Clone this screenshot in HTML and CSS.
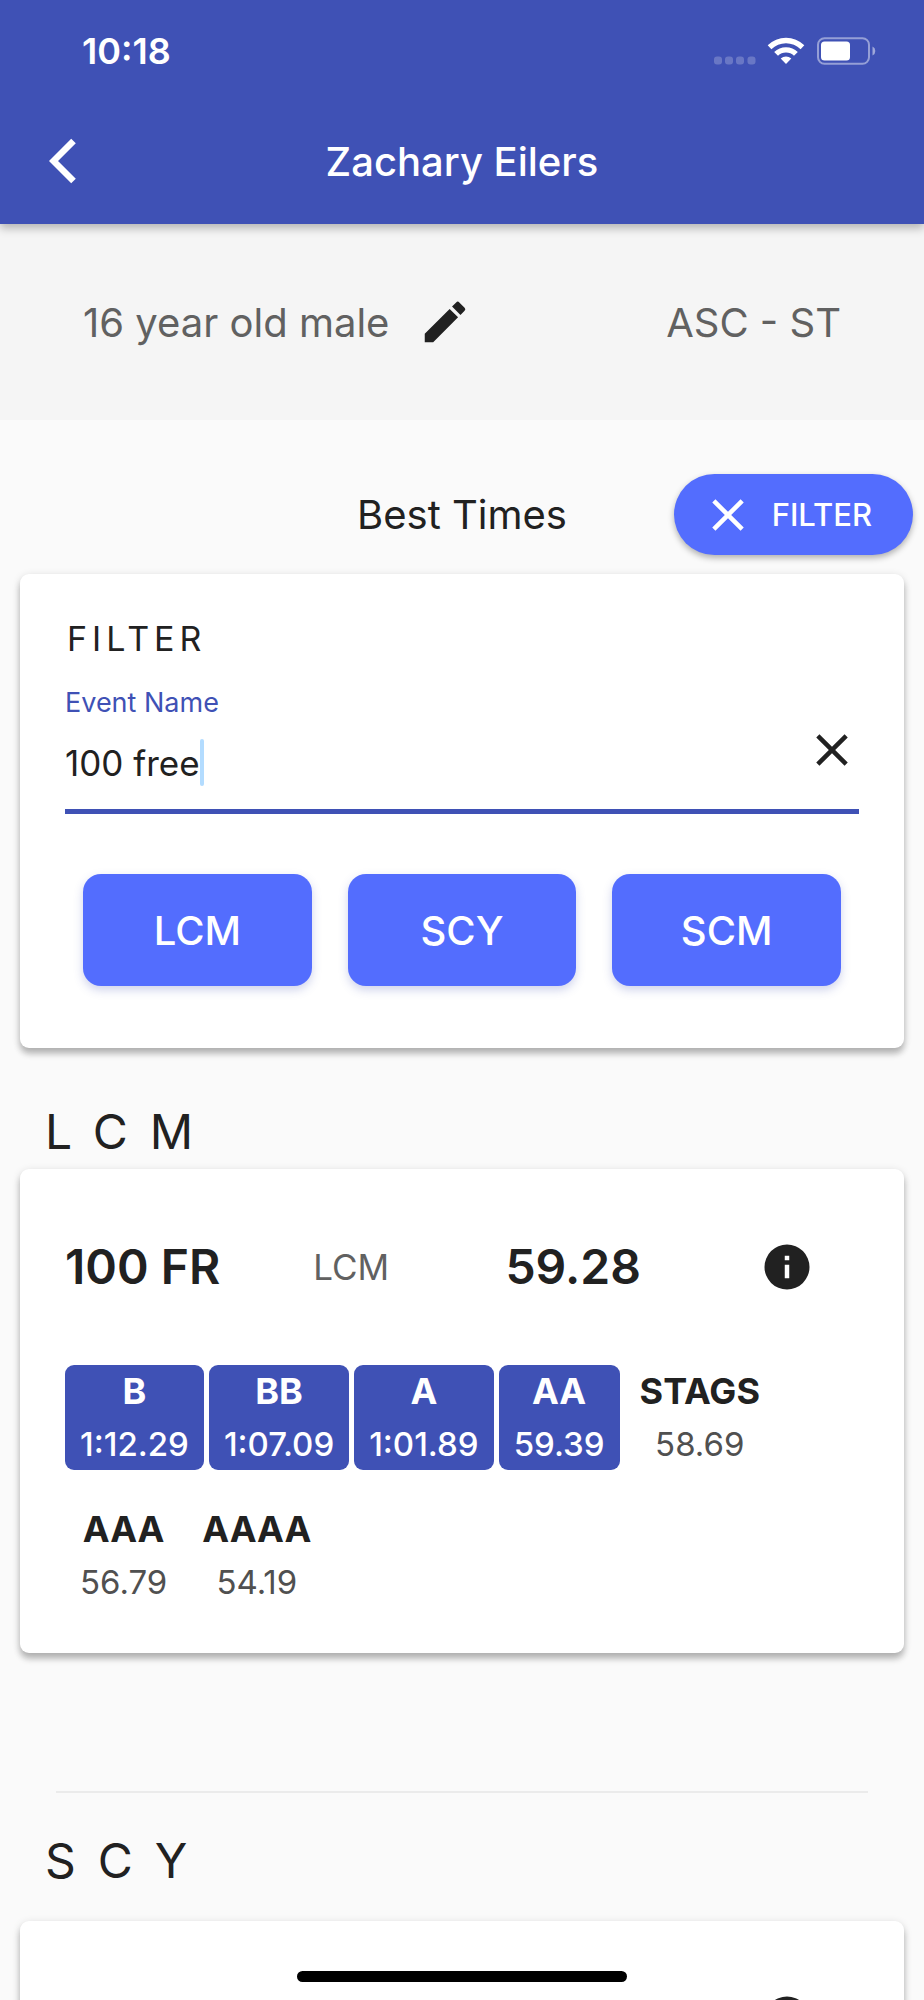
FILE: index.html
```html
<!DOCTYPE html>
<html lang="en">
<head>
  <meta charset="UTF-8" />
  <meta name="viewport" content="width=device-width, initial-scale=1.0"/>
  <title>Zachary Eilers</title>
  <link rel="stylesheet" href="styles.css">
</head>
<body>

  <header class="app-header">
    <div class="status-bar">
      <span class="clock">10:18</span>
      <svg class="status-icons" width="164" height="28" viewBox="0 0 164 28" fill="#fff" aria-hidden="true">
        <!-- signal dots -->
        <g opacity="0.22">
          <rect x="0" y="19.5" width="8" height="8" rx="3"/>
          <rect x="11" y="19.5" width="8" height="8" rx="3"/>
          <rect x="22" y="19.5" width="8" height="8" rx="3"/>
          <rect x="33.500" y="19.5" width="8" height="8" rx="3"/>
        </g>
        <!-- wifi -->
        <path d="M53.700 8.300a26 26 0 0 1 36.600 0l-3.700 3.900a20.600 20.600 0 0 0-29.200 0z"/>
        <path d="M60.200 14.900a17 17 0 0 1 23.600 0l-3.800 3.800a11.600 11.600 0 0 0-16 0z"/>
        <path d="M66.700 21.600a8 8 0 0 1 10.600 0L72 27z"/>
        <!-- battery -->
        <rect x="104" y="1.200" width="51" height="25.600" rx="6.500" fill="none" stroke="#fff" stroke-width="2" opacity="0.45"/>
        <rect x="107" y="4.500" width="29" height="19" rx="3.500"/>
        <path d="M158.500 9.500a5 5 0 0 1 0 9z" opacity="0.5"/>
      </svg>
    </div>
    <div class="title-bar">
      <button class="icon-btn back-btn" type="button" aria-label="Back">
        <svg width="28" height="46" viewBox="0 0 28 46"><path d="M24.500 3L4.500 23l20 20" fill="none" stroke="#fff" stroke-width="6.500"/></svg>
      </button>
      <h1>Zachary Eilers</h1>
    </div>
  </header>

  <section class="profile">
    <span>16 year old male</span>
    <button class="icon-btn" type="button" aria-label="Edit">
      <svg class="icon" viewBox="0 0 24 24"><path d="M3 17.250V21h3.750L17.810 9.940l-3.750-3.750L3 17.250zM20.710 7.040a1 1 0 0 0 0-1.410l-2.340-2.340a1 1 0 0 0-1.410 0l-1.830 1.830 3.750 3.750 1.830-1.830z"/></svg>
    </button>
    <span class="team">ASC - ST</span>
  </section>

  <main>
    <div class="times-header">
      <h2>Best Times</h2>
      <button class="filter-toggle" type="button">
        <svg class="icon" viewBox="0 0 24 24"><path d="M19 6.410L17.590 5 12 10.590 6.410 5 5 6.410 10.590 12 5 17.590 6.410 19 12 13.410 17.590 19 19 17.590 13.410 12z"/></svg>
        FILTER
      </button>
    </div>

    <form class="card filter-card">
      <h3>FILTER</h3>
      <label for="event_name">Event Name</label>
      <div class="field">
        <input id="event_name" name="event_name" type="text" value="100 free" autocomplete="off">
        <span class="caret"></span>
        <button class="icon-btn clear-btn" type="button" aria-label="Clear">
          <svg class="icon" viewBox="0 0 24 24"><path d="M19 6.410L17.590 5 12 10.590 6.410 5 5 6.410 10.590 12 5 17.590 6.410 19 12 13.410 17.590 19 19 17.590 13.410 12z"/></svg>
        </button>
      </div>
      <div class="course-buttons">
        <button type="button">LCM</button>
        <button type="button">SCY</button>
        <button type="button">SCM</button>
      </div>
    </form>

    <h2 class="course-heading">LCM</h2>
    <article class="card event-card">
      <div class="event-row">
        <strong>100 FR</strong>
        <span class="course">LCM</span>
        <strong>59.28</strong>
        <button class="icon-btn info-btn" type="button" aria-label="Info">
          <svg class="icon" viewBox="0 0 24 24"><path d="M12 2a10 10 0 1 0 0 20 10 10 0 0 0 0-20zm1 15h-2v-6h2v6zm0-8h-2V7h2v2z"/></svg>
        </button>
      </div>
      <ul class="standards">
        <li class="met"><b>B</b><span>1:12.29</span></li>
        <li class="met"><b>BB</b><span>1:07.09</span></li>
        <li class="met"><b>A</b><span>1:01.89</span></li>
        <li class="met"><b>AA</b><span>59.39</span></li>
        <li><b>STAGS</b><span>58.69</span></li>
        <li><b>AAA</b><span>56.79</span></li>
        <li><b>AAAA</b><span>54.19</span></li>
      </ul>
    </article>

    <hr>

    <h2 class="course-heading scy">SCY</h2>
    <article class="card event-card">
      <div class="event-row">
        <button class="icon-btn info-btn" type="button" aria-label="Info">
          <svg class="icon" viewBox="0 0 24 24"><path d="M12 2a10 10 0 1 0 0 20 10 10 0 0 0 0-20zm1 15h-2v-6h2v6zm0-8h-2V7h2v2z"/></svg>
        </button>
      </div>
    </article>
  </main>

  <div class="home-indicator"></div>

</body>
</html>
```

FILE: styles.css
```css
* {
  box-sizing: border-box;
}

body {
  margin: 0;
  height: 100vh;
  overflow: hidden;
  background: #fafafa;
  color: #212121;
  font-family: Inter, "Liberation Sans", sans-serif;
}

h1, h2, h3 {
  margin: 0;
  font-weight: 400;
}

button {
  border: none;
  font-family: inherit;
  cursor: pointer;
}

.icon {
  display: block;
  width: 54px;
  height: 54px;
  fill: currentColor;
}

.icon-btn {
  padding: 0;
  background: none;
  color: #212121;
}

/* header */
.app-header {
  position: relative;
  padding-bottom: 3px;
  background: #3f51b5;
  color: #fff;
  box-shadow: 0 4px 9px rgba(0, 0, 0, 0.28);
}

.status-bar {
  display: flex;
  justify-content: space-between;
  align-items: center;
  height: 101px;
  padding: 0 46px 0 82px;
}

.clock {
  font-size: 36px;
  font-weight: 600;
}

.title-bar {
  display: grid;
  grid-template-columns: 1fr auto 1fr;
  align-items: center;
  height: 120px;
  padding: 0 49px;
}

.title-bar h1 {
  font-size: 40px;
  font-weight: 500;
}

.back-btn {
  justify-self: start;
}

.back-btn svg {
  display: block;
}

/* swimmer info */
.profile {
  display: flex;
  align-items: center;
  gap: 29px;
  height: 196px;
  padding: 0 83px;
  background: #f5f5f5;
  color: #616161;
  font-size: 40px;
}

.team {
  margin-left: auto;
}

.times-header {
  display: grid;
  grid-template-columns: 1fr auto 1fr;
  align-items: center;
  padding: 54px 11px 19px;
}

.times-header h2 {
  grid-column: 2;
  font-size: 40px;
}

.filter-toggle {
  display: flex;
  justify-self: end;
  align-items: center;
  gap: 17px;
  height: 81px;
  padding: 0 41px 0 27px;
  border-radius: 41px;
  background: #536dfe;
  color: #fff;
  font-size: 31px;
  font-weight: 500;
  box-shadow: 0 3px 6px rgba(0, 0, 0, 0.3);
}

/* cards */
.card {
  margin: 0 20px;
  padding: 0 45px;
  border-radius: 9px;
  background: #fff;
  box-shadow: 0 6px 6px rgba(0, 0, 0, 0.22), 0 2px 9px rgba(0, 0, 0, 0.14);
}

.filter-card {
  padding-top: 36px;
  padding-bottom: 62px;
}

.filter-card h3 {
  padding-left: 2px;
  font-size: 34px;
  line-height: 58px;
  letter-spacing: 5px;
}

.filter-card label {
  display: block;
  margin-top: 15px;
  color: #3f51b5;
  font-size: 27px;
  line-height: 40px;
}

.field {
  display: flex;
  align-items: flex-start;
  height: 91px;
  border-bottom: 5px solid #3f51b5;
}

.field input {
  field-sizing: content;
  height: 79px;
  padding: 0;
  border: none;
  outline: none;
  background: none;
  color: #212121;
  font-family: inherit;
  font-size: 35px;
}

.caret {
  width: 4px;
  height: 47px;
  margin-top: 16px;
  border-radius: 2px;
  background: #b3dcff;
}

.clear-btn {
  margin-left: auto;
}

.course-buttons {
  display: grid;
  grid-template-columns: repeat(3, 1fr);
  gap: 36px;
  margin-top: 60px;
  padding: 0 18px;
}

.course-buttons button {
  height: 112px;
  padding: 0;
  border-radius: 18px;
  background: #536dfe;
  color: #fff;
  font-size: 40px;
  font-weight: 500;
  box-shadow: 0 4px 10px rgba(63, 81, 181, 0.25);
}

.course-heading {
  margin-top: 46px;
  padding-left: 45px;
  font-size: 48px;
  line-height: 75px;
  letter-spacing: 22px;
}

.course-heading.scy {
  margin: 30px 0 23px;
}

.event-card {
  padding-top: 71px;
  padding-bottom: 45px;
}

.event-row {
  display: grid;
  grid-template-columns: 40fr 31fr 41fr 16fr;
  align-items: center;
  margin-bottom: 71px;
  font-size: 48px;
  line-height: 54px;
}

.event-row strong {
  font-weight: 600;
}

.event-row .course {
  color: #616161;
  font-size: 35px;
}

.info-btn {
  grid-column: 4;
  justify-self: start;
}

/* time standards */
.standards {
  display: flex;
  flex-wrap: wrap;
  gap: 33px 5px;
  margin: 0;
  padding: 0;
  list-style: none;
}

.standards li {
  display: flex;
  flex-direction: column;
  align-items: center;
  height: 105px;
  padding: 0 15px;
  border-radius: 9px;
  line-height: 53px;
}

.standards b {
  font-size: 36px;
  font-weight: 700;
}

.standards span {
  color: #505050;
  font-size: 33px;
}

.standards .met {
  background: #3f51b5;
  color: #fff;
}

.standards .met span {
  color: #fff;
  font-weight: 500;
}

hr {
  height: 2px;
  margin: 138px 56px 0;
  border: none;
  background: #ebebeb;
}

.home-indicator {
  position: fixed;
  bottom: 18px;
  left: 50%;
  width: 330px;
  height: 11px;
  transform: translateX(-50%);
  border-radius: 6px;
  background: #000;
}
```
